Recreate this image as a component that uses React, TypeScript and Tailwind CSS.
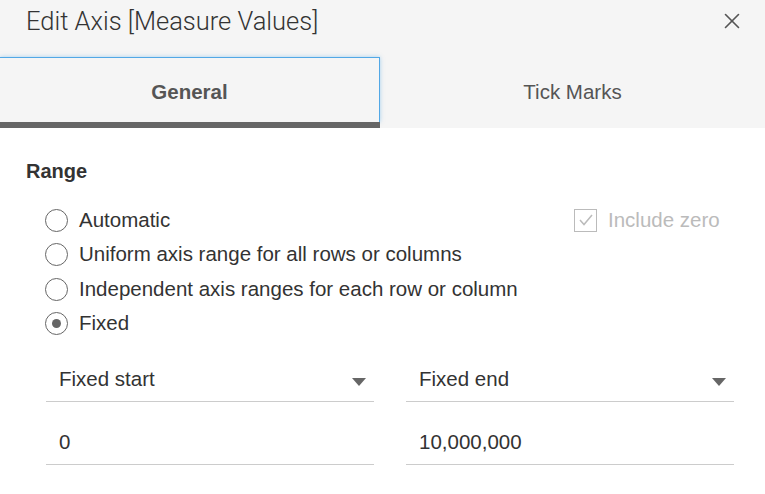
import { X } from 'lucide-react';

const font = { fontFamily: '"Liberation Sans", Arial, sans-serif' };

function Radio({ label, checked }: { label: string; checked?: boolean }) {
  return (
    <div className="flex items-center h-[34.5px]">
      <span className="w-[23px] h-[23px] rounded-full border-[1.5px] border-[#666] bg-white flex items-center justify-center ml-[45px]">
        {checked && <span className="w-[9px] h-[9px] rounded-full bg-[#666]" />}
      </span>
      <span className="ml-[11px] text-[20.5px] text-[#333]">{label}</span>
    </div>
  );
}

function Field({ value, dropdown }: { value: string; dropdown?: boolean }) {
  return (
    <div className="flex items-center justify-between h-[44px] border-b-[1.5px] border-[#ccc] pl-[13px] pr-[8px]">
      <span className="text-[20.5px] text-[#333]">{value}</span>
      {dropdown && (
        <svg width="14" height="8" viewBox="0 0 14 8" className="mt-[4px]">
          <path d="M0 0 L14 0 L7 8 Z" fill="#666" />
        </svg>
      )}
    </div>
  );
}

export default function App() {
  return (
    <div className="w-[765px] h-[494px] bg-white overflow-hidden" style={font}>
      <div className="bg-[#f5f5f5]">
        <div className="flex items-center justify-between h-[57px] pl-[26px] pr-[20px]">
          <span
            className="text-[25.5px] font-light text-[#333] -mt-[14px]"
            style={{ fontFamily: 'Roboto, "Liberation Sans", sans-serif' }}
          >
            Edit Axis [Measure Values]
          </span>
          <X className="w-[26px] h-[26px] text-[#555] -mt-[15px]" strokeWidth={1.5} />
        </div>
        <div className="flex h-[71px]">
          <div className="w-[380px] flex flex-col">
            <div className="flex-1 flex items-center justify-center pt-[5px] border-t border-r-[1.5px] border-[#52a8e6] shadow-[0_0_4px_rgba(82,168,230,0.5)] text-[20.5px] font-bold text-[#555]">
              General
            </div>
            <div className="h-[6px] bg-[#666]" />
          </div>
          <div className="flex-1 flex items-center justify-center pb-[1px] text-[20.5px] text-[#555]">Tick Marks</div>
        </div>
      </div>

      <div className="pt-[28px]">
        <div className="pl-[26px] text-[20px] font-bold text-[#333]">Range</div>
        <div className="relative mt-[17px]">
          <Radio label="Automatic" />
          <Radio label="Uniform axis range for all rows or columns" />
          <Radio label="Independent axis ranges for each row or column" />
          <Radio label="Fixed" checked />
          <div className="absolute top-[2px] left-[574px] flex items-center">
            <span className="w-[23px] h-[23px] border-[1.5px] border-[#bbb] flex items-center justify-center">
              <svg width="14" height="12" viewBox="0 0 14 12">
                <path d="M1 6 L5 10.5 L13 1" fill="none" stroke="#bbb" strokeWidth="1.5" />
              </svg>
            </span>
            <span className="ml-[11px] text-[20.5px] text-[#bbb]">Include zero</span>
          </div>
        </div>
        <div className="grid grid-cols-2 gap-x-[32px] px-[46px] pr-[31px] mt-[17px]">
          <Field value="Fixed start" dropdown />
          <Field value="Fixed end" dropdown />
          <div className="mt-[19px]"><Field value="0" /></div>
          <div className="mt-[19px]"><Field value="10,000,000" /></div>
        </div>
      </div>
    </div>
  );
}
